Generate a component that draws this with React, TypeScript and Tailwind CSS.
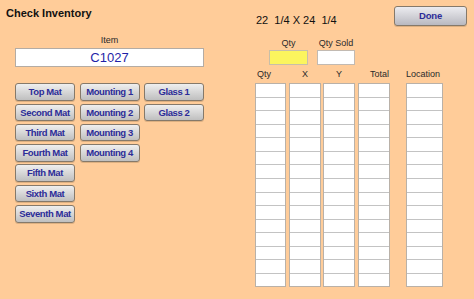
import React from "react";

const btn =
  "h-[17.5px] w-[60px] rounded-[3px] border border-[#85796a] bg-gradient-to-b from-[#efefef] to-[#bfbfbf] text-[9.5px] font-bold tracking-[-0.4px] text-[#2c2c98] leading-none flex items-center justify-center shadow-[0_1px_0_rgba(120,90,60,0.25)]";

function Btn({ label }: { label: string }) {
  return <div className={btn}>{label}</div>;
}

function Col({ w }: { w: string }) {
  const rows = Array.from({ length: 15 });
  return (
    <div className={`${w} h-[204px] flex flex-col border border-[#b9b1a8] bg-white`}>
      {rows.map((_, i) => (
        <div
          key={i}
          className={`flex-1 bg-white ${i > 0 ? "border-t border-[#c3c3c3]" : ""}`}
        />
      ))}
    </div>
  );
}

export default function App() {
  return (
    <div
      className="w-[474px] h-[299px] bg-[#ffcc99] flex text-[#222]"
      style={{ fontFamily: '"Liberation Sans", Arial, sans-serif' }}
    >
      {/* Left panel */}
      <div className="w-[240px] flex flex-col">
        <div className="mt-[7px] ml-[6px] h-[13px] leading-[13px] text-[11px] font-bold text-[#111]">
          Check Inventory
        </div>
        <div className="mt-[14.5px] ml-[15px] w-[189px] text-center text-[9px] leading-[11px] text-[#2a2a2a]">
          Item
        </div>
        <div className="mt-[2.8px] ml-[15px] w-[189px] h-[18.4px] bg-white border border-[#b4aca4] flex items-center justify-center text-[13px] leading-none text-[#1f1fa8]">
          C1027
        </div>
        <div className="mt-[16.6px] ml-[15px] flex gap-[4.5px]">
          <div className="flex flex-col gap-[2.8px]">
            <Btn label="Top Mat" />
            <Btn label="Second Mat" />
            <Btn label="Third Mat" />
            <Btn label="Fourth Mat" />
            <Btn label="Fifth Mat" />
            <Btn label="Sixth Mat" />
            <Btn label="Seventh Mat" />
          </div>
          <div className="flex flex-col gap-[2.8px]">
            <Btn label="Mounting 1" />
            <Btn label="Mounting 2" />
            <Btn label="Mounting 3" />
            <Btn label="Mounting 4" />
          </div>
          <div className="flex flex-col gap-[2.8px]">
            <Btn label="Glass 1" />
            <Btn label="Glass 2" />
          </div>
        </div>
      </div>

      {/* Right panel */}
      <div className="flex-1 flex flex-col">
        <div className="h-[26px] flex items-start">
          <div className="mt-[14px] ml-[16px] text-[11px] leading-[13px] whitespace-pre text-[#111]">
            {"22  1/4 X 24  1/4"}
          </div>
          <div className="ml-auto mr-[7px] mt-[6px] h-[20px] w-[73px] rounded-[3px] border border-[#85796a] bg-gradient-to-b from-[#ececf0] to-[#b9b9c0] flex items-center justify-center text-[9.5px] text-[#2c2c98] font-bold tracking-[-0.2px] shadow-[0_1px_0_rgba(120,90,60,0.25)]">
            Done
          </div>
        </div>
        <div className="mt-[11.8px] ml-[29px] flex gap-[9px]">
          <div className="flex flex-col items-center">
            <div className="text-[9px] leading-[11px] text-[#2a2a2a]">Qty</div>
            <div className="mt-[1.2px] w-[39px] h-[15px] bg-[#fbf55e] border border-[#c8bfa8]" />
          </div>
          <div className="flex flex-col items-center">
            <div className="text-[9px] leading-[11px] text-[#2a2a2a]">Qty Sold</div>
            <div className="mt-[1.2px] w-[38px] h-[15px] bg-white border border-[#c2bab2]" />
          </div>
        </div>
        <div className="mt-[4.5px] ml-[15px] flex text-[9px] leading-[11px] text-[#2a2a2a]">
          <div className="w-[31px] pl-[2px]">Qty</div>
          <div className="ml-[3px] w-[32px] text-center">X</div>
          <div className="ml-[2px] w-[32px] text-center">Y</div>
          <div className="ml-[3px] w-[32px] text-right pr-[1px]">Total</div>
          <div className="ml-[16px] w-[37px]">Location</div>
        </div>
        <div className="mt-[2.8px] ml-[15px] flex">
          <Col w="w-[31px]" />
          <div className="ml-[3px]">
            <Col w="w-[32px]" />
          </div>
          <div className="ml-[2px]">
            <Col w="w-[32px]" />
          </div>
          <div className="ml-[3px]">
            <Col w="w-[32px]" />
          </div>
          <div className="ml-[16px]">
            <Col w="w-[37px]" />
          </div>
        </div>
      </div>
    </div>
  );
}
